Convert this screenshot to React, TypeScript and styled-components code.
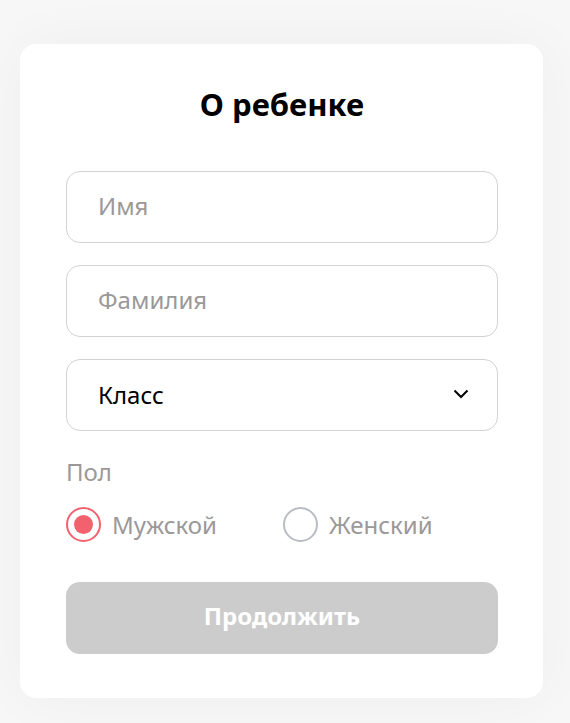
import React, { useState } from 'react';
import styled, { createGlobalStyle } from 'styled-components';

const GlobalStyle = createGlobalStyle`
	html, body {
		margin: 0;
		padding: 0;
		background: #ffffff;
		font-family: "Noto Sans", "Open Sans", sans-serif;
	}
	* {
		box-sizing: border-box;
	}
`;

const Page = styled.div`
	min-height: 723px;
	padding: 44px 27px 25px 20px;
	background: #f7f7f7;
`;

const Card = styled.form`
	width: 523px;
	background: #ffffff;
	border-radius: 16px;
	padding: 84px 45px 44px 46px;
	display: flex;
	flex-direction: column;
	box-shadow: 0 0 60px rgba(0, 0, 0, 0.04);
`;

const Title = styled.h1`
	margin: -44px 0 47px;
	font-size: 31px;
	line-height: 40px;
	font-weight: 700;
	text-align: center;
	color: #000000;
`;

const Fields = styled.div`
	display: flex;
	flex-direction: column;
	gap: 22px;
`;

const Input = styled.input`
	height: 72px;
	width: 100%;
	border: 1px solid #d2d2d2;
	border-radius: 14px;
	padding: 0 31px 3px;
	font-family: inherit;
	font-size: 24px;
	color: #000000;
	outline: none;
	background: #ffffff;

	&::placeholder {
		color: #9c9898;
	}
`;

const SelectBox = styled.div`
	height: 72px;
	border: 1px solid #d2d2d2;
	border-radius: 14px;
	padding: 0 28px 2px 31px;
	display: flex;
	align-items: center;
	justify-content: space-between;
	font-size: 24px;
	color: #000000;
	cursor: pointer;
`;

const Label = styled.div`
	margin-top: 26px;
	font-size: 24px;
	line-height: 30px;
	color: #9c9898;
`;

const RadioRow = styled.div`
	display: flex;
	gap: 66px;
	margin-top: 20px;
`;

const RadioOption = styled.label`
	display: flex;
	align-items: center;
	gap: 11px;
	font-size: 24px;
	color: #9c9898;
	cursor: pointer;
`;

const RadioCircle = styled.span<{ $checked: boolean }>`
	width: 35px;
	height: 35px;
	border-radius: 50%;
	border: 2px solid ${(p) => (p.$checked ? '#f3606e' : '#b9bcc2')};
	display: flex;
	align-items: center;
	justify-content: center;

	&::after {
		content: '';
		width: 19px;
		height: 19px;
		border-radius: 50%;
		background: ${(p) => (p.$checked ? '#f3606e' : 'transparent')};
	}
`;

const SubmitButton = styled.button`
	margin-top: 40px;
	height: 72px;
	border: none;
	border-radius: 14px;
	background: #cccccc;
	color: #ffffff;
	font-family: inherit;
	font-size: 24px;
	font-weight: 700;
	padding: 0 0 5px;
	cursor: not-allowed;
`;

const Chevron = () => (
	<svg width="16" height="10" viewBox="0 0 16 10" fill="none">
		<path d="M1.5 1.5L8 8L14.5 1.5" stroke="#000" strokeWidth="2" />
	</svg>
);

const App: React.FC = () => {
	const [gender, setGender] = useState<'m' | 'f'>('m');

	return (
		<>
			<GlobalStyle />
			<Page>
				<Card onSubmit={(e) => e.preventDefault()}>
					<Title>О ребенке</Title>
					<Fields>
						<Input placeholder='Имя' />
						<Input placeholder='Фамилия' />
						<SelectBox>
							Класс
							<Chevron />
						</SelectBox>
					</Fields>
					<Label>Пол</Label>
					<RadioRow>
						<RadioOption onClick={() => setGender('m')}>
							<RadioCircle $checked={gender === 'm'} />
							Мужской
						</RadioOption>
						<RadioOption onClick={() => setGender('f')}>
							<RadioCircle $checked={gender === 'f'} />
							Женский
						</RadioOption>
					</RadioRow>
					<SubmitButton type='submit' disabled>Продолжить</SubmitButton>
				</Card>
			</Page>
		</>
	);
};

export default App;
